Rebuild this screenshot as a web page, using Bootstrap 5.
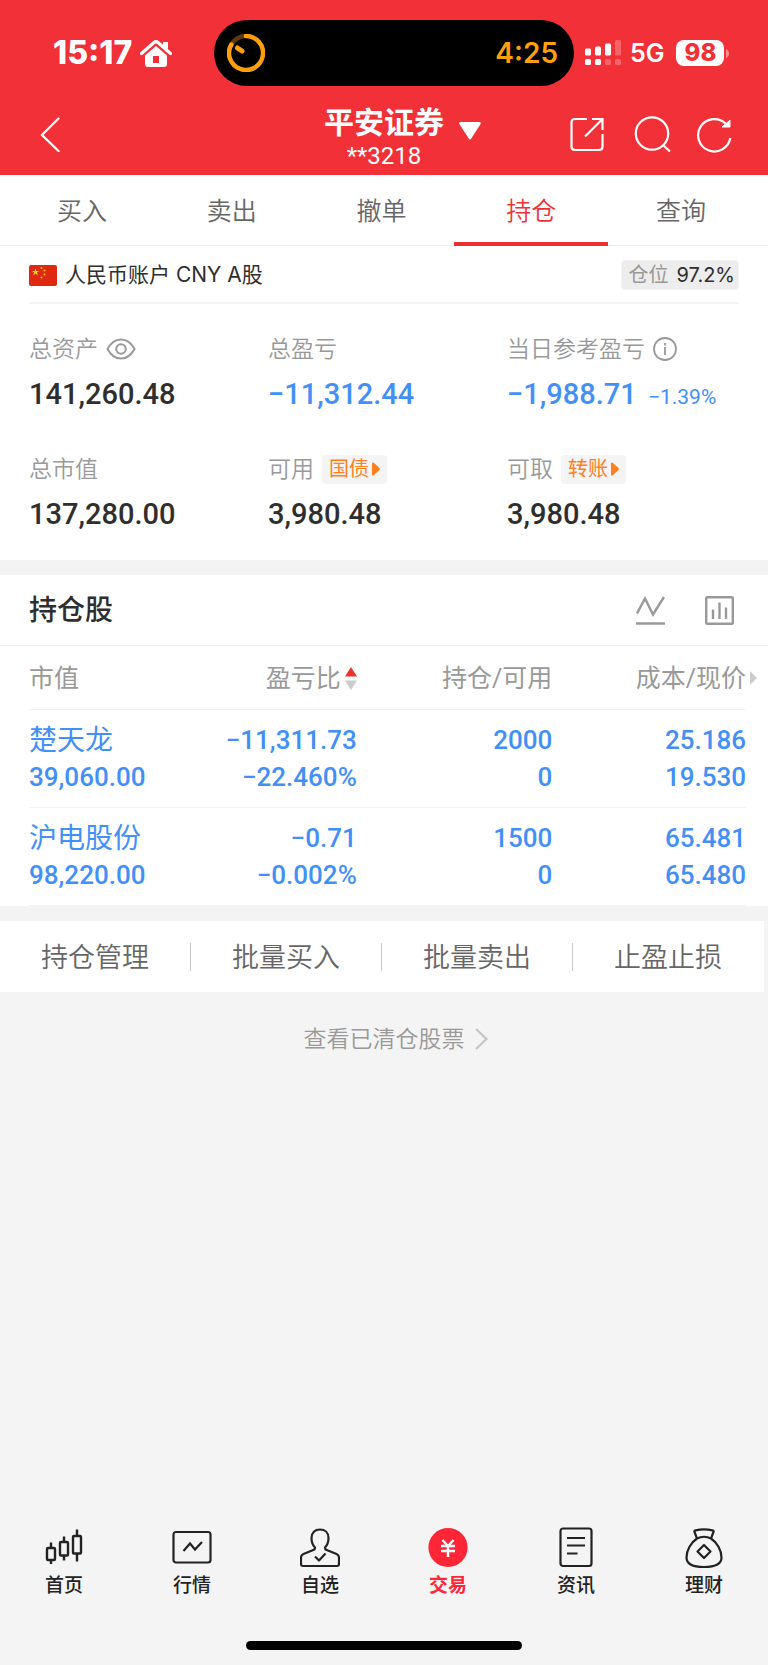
<!DOCTYPE html>
<html lang="zh-CN">
<head>
<meta charset="utf-8">
<meta name="viewport" content="width=device-width, initial-scale=1">
<title>平安证券 持仓</title>
<link href="https://cdn.jsdelivr.net/npm/bootstrap@5.3.0/dist/css/bootstrap.min.css" rel="stylesheet">
<style>
  :root { --brand: #f23037; --down: #4290f5; --page: #f4f4f4; --hair: #f3f3f3; --muted: #999; --ink: #2e2e2e; }
  body { background: var(--page); color: var(--ink); font-family: Inter, "Noto Sans CJK SC", sans-serif; font-size: 23px; line-height: 32px; font-weight: 350; }
  a { text-decoration: none; color: inherit; }
  button { background: none; border: 0; padding: 0; color: inherit; font-weight: inherit; }
  svg { display: block; flex: none; }
  .num { font-family: Roboto, "Noto Sans CJK SC", sans-serif; }

  .app-head { background: var(--brand); color: #fff; height: 175px; }
  .status { height: 66px; margin-top: 20px; grid-template-columns: 214px 1fr 194px; }
  .clock { font-size: 32px; font-weight: 800; padding-left: 53px; }
  .island { background: #000; border-radius: 33px; padding: 0 16px 0 13px; color: #ff9f0a; font-size: 28px; font-weight: 600; }
  .net { font-size: 25px; font-weight: 600; padding-left: 11px; }
  .batt { background: #fff; color: var(--brand); border-radius: 8px; width: 48px; height: 26px; font-size: 24px; line-height: 26px; font-weight: 800; }
  .titlebar { height: 89px; display: grid; grid-template-columns: 1fr auto 1fr; align-items: center; padding: 8px 36px 0; }
  .account-pick { padding-top: 8px; }
  .broker { font-size: 30px; line-height: 34px; font-weight: 700; }
  .acct-no { font-size: 24px; line-height: 34px; font-weight: 400; }
  .caret { left: 100%; top: 25px; margin-left: 15px; }

  .tabs { padding: 0 12px 0 7px; border-bottom: 1px solid #ececec; height: 71px; }
  .tabs a { font-size: 25px; line-height: 73px; color: #666; height: 71px; }
  .tabs a.active { color: var(--brand); border-bottom: 4px solid #e82f34; margin: 0 -2px; }

  .account { margin: 0 29px; height: 58px; padding-top: 2px; border-bottom: 2px solid #f5f5f5; font-size: 21px; font-weight: 400; }
  .position { background: #ededed; border: 1px solid #f3f3f3; border-radius: 4px; height: 30px; line-height: 28px; padding: 0 3px 0 7px; font-size: 20px; }
  .position span { color: var(--muted); }
  .summary { padding: 28px 22px 23px 29px; display: grid; grid-template-columns: repeat(3, 1fr); row-gap: 35px; }
  .label-line { color: var(--muted); height: 34px; }
  .big { margin-top: 5px; height: 46px; font-size: 29px; line-height: 46px; font-weight: 500; }
  .pct { font-size: 21px; line-height: 30px; font-weight: 400; }
  .down { color: var(--down); }
  .chip { background: var(--page); color: #ff7f1f; border-radius: 4px; height: 29px; padding: 0 7px; gap: 3px; font-size: 20px; line-height: 28px; font-weight: 400; }
  .band { height: 15px; background: #f3f3f3; }

  .hold-head { height: 71px; padding: 0 34px 0 29px; border-bottom: 1px solid #eee; }
  .hold-head h2 { font-size: 28px; line-height: 70px; font-weight: 500; }
  .hold-wrap { padding: 0 22px 0 29px; }
  .hold { --bs-table-bg: #fff; table-layout: fixed; margin: 0; border-color: var(--hair); }
  .hold th { font-size: 25px; line-height: 61px; font-weight: 400; color: var(--muted); padding: 2px 0 0; }
  .hold td { font-size: 26px; line-height: 37px; font-weight: 500; color: var(--down); padding: 12px 0 11px; }
  .hold th:nth-child(2), .hold td:nth-child(2) { padding-right: 2px; }
  .hold .stock { font-size: 28px; line-height: 38px; height: 37px; font-weight: 400; }
  .more { left: 100%; top: 23px; margin-left: 4px; }

  .actions { height: 71px; padding-right: 1px; margin-right: 4px; font-size: 27px; color: #666; }
  .actions button { padding-top: 2px; }
  .rule { width: 1px; height: 28px; background: #ccc; }
  .cleared { color: var(--muted); margin-top: 31px; }

  .bottom { padding-bottom: 42px; font-size: 19px; line-height: 26px; font-weight: 500; color: #222; }
  .bottom a { height: 72px; }
  .bottom .active { color: #ff2637; font-weight: 700; }
  .home-bar { width: 36%; height: 9px; border-radius: 5px; background: #000; margin-bottom: 15px; }
</style>
</head>
<body class="d-flex flex-column min-vh-100">

<header class="app-head d-flex flex-column">
  <div class="status d-grid align-items-center">
    <div class="clock d-flex align-items-center gap-2">15:17
      <svg width="32" height="28" viewBox="0 0 32 28" fill="#fff"><path d="M1.500 14.500 14 3.500q2-1.700 4 0l12.500 11" fill="none" stroke="#fff" stroke-width="3.200" stroke-linecap="round"/><path d="M23 3h5v9l-5-4z"/><path fill-rule="evenodd" d="M16 7 27 16.500V25q0 3-3 3H8q-3 0-3-3v-8.500zM13 17v7h6v-7z"/></svg>
    </div>
    <div class="island h-100 d-flex align-items-center justify-content-between">
      <svg width="38" height="38" viewBox="0 0 38 38" fill="none" stroke="#ff9f0a" stroke-width="4.500" stroke-linecap="round"><path d="M4.200 11A17 17 0 0 1 19 2" stroke="#5c3b12"/><path d="M19 2a17 17 0 1 1-14.700 8.500"/><path d="m10.500 14 4.500 3" stroke-width="5"/></svg>
      <span>4:25</span>
    </div>
    <div class="net d-flex align-items-center">
      <svg width="37" height="27" viewBox="0 0 37 27" fill="#fff"><rect y="8.500" width="6" height="7" rx="1.500"/><rect x="10" y="6.500" width="6" height="9" rx="1.500"/><rect x="20" y="3.500" width="6" height="12" rx="1.500"/><rect y="19" width="6" height="6" rx="1.500"/><rect x="10" y="19" width="6" height="6" rx="1.500"/><g opacity=".25"><rect x="30" width="6" height="15.500" rx="1.500"/><rect x="20" y="19" width="6" height="6" rx="1.500"/><rect x="30" y="19" width="6" height="6" rx="1.500"/></g></svg>
      <span class="ms-2 me-2 pe-1">5G</span>
      <span class="batt text-center">98</span>
      <svg width="6" height="9" viewBox="0 0 6 9"><path d="M2 0q3 1.500 3 4.500T2 9z" fill="#fff" opacity=".45"/></svg>
    </div>
  </div>
  <div class="titlebar">
    <button type="button" aria-label="返回" class="me-auto"><svg width="26" height="36" viewBox="-3 0 26 36" fill="none" stroke="#fff" stroke-width="2.200" stroke-linecap="round"><path d="M19.500 1.500 3 18l16.500 16"/></svg></button>
    <button type="button" class="account-pick position-relative text-center">
      <div class="broker">平安证券</div>
      <div class="acct-no num">**3218</div>
      <svg class="caret position-absolute" width="22" height="18" viewBox="0 0 22 18"><path d="M2 0h18q3 0 1.300 2.500l-9 14q-1.300 1.800-2.600 0l-9-14Q-1 0 2 0z" fill="#fff"/></svg>
    </button>
    <div class="d-flex justify-content-end align-items-center">
      <button type="button" aria-label="分享" class="me-4"><svg width="42" height="36" viewBox="0 0 42 36" fill="none" stroke="#fff" stroke-width="2.200"><path d="M19 2H7Q3.500 2 3.500 5.500v24Q3.500 33 7 33h24q3.500 0 3.500-3.500V17"/><path d="M24 2h10.500v11M34.500 2 17 19.500"/></svg></button>
      <button type="button" aria-label="搜索" class="me-4"><svg width="38" height="37" viewBox="0 0 38 37" fill="none" stroke="#fff" stroke-width="2.200"><circle cx="18" cy="17.500" r="16.200"/><path d="m29 29 7 6.500"/></svg></button>
      <button type="button" aria-label="刷新"><svg width="36" height="37" viewBox="0 0 36 37" fill="none" stroke="#fff" stroke-width="2.200"><path d="M30 8A16.200 16.200 0 1 0 34.300 22"/><path d="M34 4v7h-8z" fill="#fff" stroke-width="1"/></svg></button>
    </div>
  </div>
</header>

<main class="flex-grow-1">
  <nav class="tabs bg-white row row-cols-5 g-0 text-center">
    <a class="col" href="#">买入</a>
    <a class="col" href="#">卖出</a>
    <a class="col" href="#">撤单</a>
    <div class="col"><a class="active d-block" href="#">持仓</a></div>
    <a class="col" href="#">查询</a>
  </nav>

  <section class="bg-white">
    <div class="account d-flex align-items-center justify-content-between">
      <div class="d-flex align-items-center gap-2">
        <svg width="28" height="21" viewBox="0 0 28 21"><rect width="28" height="21" rx="2" fill="#de2910"/><g fill="#ffde00"><path d="m6.500 3.500.9 2.500H10L7.900 7.600l.8 2.600-2.200-1.600-2.200 1.600.8-2.600L3 6h2.600z"/><circle cx="12.500" cy="3" r="1"/><circle cx="15.500" cy="5.500" r="1"/><circle cx="15.500" cy="9.500" r="1"/><circle cx="12.500" cy="12.500" r="1"/></g></svg>
        <span>人民币账户 CNY A股</span>
      </div>
      <div class="position"><span class="me-2">仓位</span>97.2%</div>
    </div>
    <div class="summary">
      <div>
        <div class="label-line d-flex align-items-center gap-2">总资产
          <button type="button" aria-label="隐藏金额"><svg width="30" height="22" viewBox="0 0 30 22" fill="none" stroke="#999" stroke-width="2"><path d="M1.500 11C5 4.500 9.500 1.500 15 1.500S25 4.500 28.500 11C25 17.500 20.500 20.500 15 20.500S5 17.500 1.500 11z"/><circle cx="15" cy="11" r="4.800"/></svg></button>
        </div>
        <div class="big num">141,260.48</div>
      </div>
      <div>
        <div class="label-line d-flex align-items-center">总盈亏</div>
        <div class="big num down">−11,312.44</div>
      </div>
      <div>
        <div class="label-line d-flex align-items-center gap-2">当日参考盈亏
          <button type="button" aria-label="说明"><svg width="24" height="24" viewBox="0 0 24 24" fill="none" stroke="#999" stroke-width="1.800"><circle cx="12" cy="12" r="11"/><path d="M12 6v2.500M12 10v8"/></svg></button>
        </div>
        <div class="big num down text-nowrap">−1,988.71 <span class="pct ms-1">−1.39%</span></div>
      </div>
      <div>
        <div class="label-line d-flex align-items-center">总市值</div>
        <div class="big num">137,280.00</div>
      </div>
      <div>
        <div class="label-line d-flex align-items-center gap-2">可用
          <button type="button" class="chip d-flex align-items-center">国债<svg width="8" height="14" viewBox="0 0 8 14"><path d="M0 1q1-1 2 0l5.500 5q.8 1 0 2L2 13q-1 1-2 0z" fill="#ff7f1f"/></svg></button>
        </div>
        <div class="big num">3,980.48</div>
      </div>
      <div>
        <div class="label-line d-flex align-items-center gap-2">可取
          <button type="button" class="chip d-flex align-items-center">转账<svg width="8" height="14" viewBox="0 0 8 14"><path d="M0 1q1-1 2 0l5.500 5q.8 1 0 2L2 13q-1 1-2 0z" fill="#ff7f1f"/></svg></button>
        </div>
        <div class="big num">3,980.48</div>
      </div>
    </div>
  </section>

  <div class="band"></div>

  <section class="bg-white">
    <div class="hold-head d-flex align-items-center">
      <h2 class="m-0 me-auto">持仓股</h2>
      <button type="button" aria-label="走势" class="me-4 pe-3"><svg width="29" height="29" viewBox="0 0 29 29" fill="none" stroke="#999" stroke-width="2.400"><path d="m1 17.500 8-15 8 16L28 1M0 27.500h29"/></svg></button>
      <button type="button" aria-label="统计"><svg width="29" height="29" viewBox="0 0 29 29" fill="none" stroke="#999" stroke-width="2.400"><rect x="1.200" y="1.200" width="26.600" height="26.600" rx="1"/><path d="M8 13.500V23M14.500 6.500V23M21 11.500V23"/></svg></button>
    </div>
    <div class="hold-wrap">
      <table class="hold table num text-end">
        <colgroup><col style="width:20%"><col style="width:26%"><col style="width:27%"><col style="width:27%"></colgroup>
        <thead>
          <tr>
            <th scope="col" class="text-start">市值</th>
            <th scope="col"><div class="d-flex align-items-center justify-content-end gap-1">盈亏比<svg width="12" height="23" viewBox="0 0 12 23"><path d="m6 0 6 9.500H0z" fill="#f0322f"/><path d="M0 13.500h12L6 23z" fill="#ccc"/></svg></div></th>
            <th scope="col">持仓/可用</th>
            <th scope="col"><div class="position-relative">成本/现价<svg class="more position-absolute" width="7" height="14" viewBox="0 0 7 14"><path d="m0 0 7 7-7 7z" fill="#ccc"/></svg></div></th>
          </tr>
        </thead>
        <tbody>
          <tr>
            <td class="text-start"><div class="stock">楚天龙</div><div>39,060.00</div></td>
            <td><div>−11,311.73</div><div>−22.460%</div></td>
            <td><div>2000</div><div>0</div></td>
            <td><div>25.186</div><div>19.530</div></td>
          </tr>
          <tr>
            <td class="text-start"><div class="stock">沪电股份</div><div>98,220.00</div></td>
            <td><div>−0.71</div><div>−0.002%</div></td>
            <td><div>1500</div><div>0</div></td>
            <td><div>65.481</div><div>65.480</div></td>
          </tr>
        </tbody>
      </table>
    </div>
  </section>

  <div class="band"></div>

  <div class="actions bg-white d-flex align-items-center">
    <button type="button" class="flex-fill">持仓管理</button><span class="rule"></span>
    <button type="button" class="flex-fill">批量买入</button><span class="rule"></span>
    <button type="button" class="flex-fill">批量卖出</button><span class="rule"></span>
    <button type="button" class="flex-fill">止盈止损</button>
  </div>

  <a href="#" class="cleared d-flex align-items-center justify-content-center gap-2 ps-4">查看已清仓股票<svg width="16" height="22" viewBox="0 0 16 22" fill="none" stroke="#c4c4c4" stroke-width="2.200"><path d="m3 1 10.500 10L3 21"/></svg></a>
</main>

<nav class="bottom row row-cols-6 g-0 text-center">
  <a class="col d-flex flex-column align-items-center justify-content-between" href="#">
    <svg width="40" height="42" viewBox="0 0 40 42" fill="none" stroke="#222" stroke-width="2.400"><rect x="3" y="21" width="8" height="12" rx="1"/><path d="M7 15.500V21m0 12v4"/><rect x="16" y="15" width="8" height="13.500" rx="1"/><path d="M20 9.500V15m0 13.500v5"/><rect x="29" y="9" width="8" height="17.500" rx="1"/><path d="M33 2.500V9m0 17.500v8"/></svg>首页</a>
  <a class="col d-flex flex-column align-items-center justify-content-between" href="#">
    <svg width="40" height="42" viewBox="0 0 40 42" fill="none" stroke="#222" stroke-width="2.200"><rect x="1.500" y="5" width="37" height="30.500" rx="2.500"/><path d="m11.500 24 6.500-7.500 5 6 7-7.500"/></svg>行情</a>
  <a class="col d-flex flex-column align-items-center justify-content-between" href="#">
    <svg width="40" height="42" viewBox="0 0 40 42" fill="none" stroke="#222" stroke-width="2.200" stroke-linejoin="round"><path d="M15 20.500C12.500 18 11.500 15 11.500 11 11.500 5.500 15 2.500 20 2.500s8.500 3 8.500 8.500c0 4-1 7-3.500 9.500l.5 2 11 4.500q2.500 1 2.500 3.500V37q0 2-2 2H3q-2 0-2-2v-6.500Q1 28 3.500 27l11-4.500z"/><path d="m15 29.500 4 4 6.500-7"/></svg>自选</a>
  <a class="active col d-flex flex-column align-items-center justify-content-between" href="#">
    <svg width="40" height="42" viewBox="0 0 40 42" fill="none"><circle cx="20" cy="20.500" r="19.600" fill="#ff2637"/><path d="m14.500 13 5.500 6 5.500-6M13 19h14M13 24h14M20 19v11" stroke="#fff" stroke-width="2.400"/></svg>交易</a>
  <a class="col d-flex flex-column align-items-center justify-content-between" href="#">
    <svg width="40" height="42" viewBox="0 0 40 42" fill="none" stroke="#222" stroke-width="2.200"><rect x="4.500" y="1.500" width="31" height="37.500" rx="2.500"/><path d="M11 11h18M11 18.500h18M11 26.500h10.500"/></svg>资讯</a>
  <a class="col d-flex flex-column align-items-center justify-content-between" href="#">
    <svg width="40" height="42" viewBox="0 0 40 42" fill="none" stroke="#222" stroke-width="2.200" stroke-linejoin="round"><path d="M13 11.500 10.500 5q-.5-1.500 1-1.700Q20 1.500 28.500 3.300q1.500.2 1 1.700L27 11.500"/><path d="M13 11.500q7-3.500 14 0c6 4 10.500 11.500 10.500 19 0 6-5 9.500-17.500 9.500S2.500 36.500 2.500 30.500c0-7.500 4.500-15 10.500-19z"/><path d="m20 18 6.500 6.500L20 31l-6.500-6.500z"/></svg>理财</a>
</nav>
<div class="home-bar mx-auto"></div>

<script src="https://cdn.jsdelivr.net/npm/bootstrap@5.3.0/dist/js/bootstrap.bundle.min.js"></script>
</body>
</html>
